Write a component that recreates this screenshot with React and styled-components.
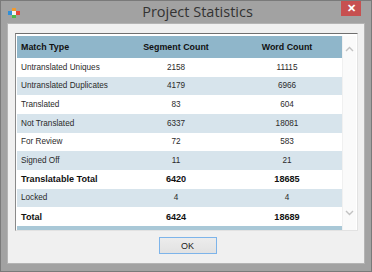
import React from "react";
import styled, { createGlobalStyle } from "styled-components";

const Global = createGlobalStyle`
  html, body {
    margin: 0;
    padding: 0;
    background: #8a8a8a;
  }
  * {
    box-sizing: border-box;
  }
`;

const Window = styled.div`
  width: 372px;
  height: 272px;
  background: #a2a2a2;
  border: 1px solid #7a7a7a;
  display: flex;
  flex-direction: column;
  overflow: hidden;
`;

const TitleBar = styled.div`
  height: 22px;
  display: flex;
  align-items: flex-start;
  padding-left: 7px;
`;

const Icon = styled.svg`
  margin-top: 7px;
  width: 12px;
  height: 10px;
`;

const Title = styled.div`
  flex: 1;
  text-align: center;
  padding-left: 34px;
  padding-top: 2px;
  font-family: "Open Sans", "Noto Sans", sans-serif;
  font-size: 14.5px;
  color: #333333;
  line-height: 18px;
`;

const CloseButton = styled.div`
  width: 20px;
  height: 16px;
  margin-top: -1px;
  margin-right: 10px;
  background: #c75050;
  color: #ffffff;
  font-family: "Liberation Sans", Arial, sans-serif;
  font-weight: bold;
  font-size: 11px;
  display: flex;
  align-items: center;
  justify-content: center;
`;

const Body = styled.div`
  flex: 1;
  margin: 0 6px 7px 6px;
  background: #f0f0f0;
  border: 1px solid #b4b4b4;
  display: flex;
  flex-direction: column;
  align-items: center;
  padding: 9px 6px 0 7px;
`;

const Panel = styled.div`
  width: 100%;
  height: 198px;
  background: #ffffff;
  border-top: 1px solid #6f6f6f;
  border-left: 1px solid #8a8a8a;
  border-right: 1px solid #e2e2e2;
  border-bottom: 1px solid #e2e2e2;
  padding: 2px 1px 0 1px;
  display: flex;
  overflow: hidden;
`;

const Table = styled.div`
  width: 325px;
  display: flex;
  flex-direction: column;
  font-family: "Liberation Sans", Arial, sans-serif;
  color: #1a1a1a;
`;

const Row = styled.div`
  display: grid;
  grid-template-columns: 103px 112px 110px;
  align-items: center;
  height: ${(p) => (p.$head ? "22px" : "18.67px")};
  flex-shrink: 0;
  background: ${(p) => (p.$head ? "#8fb6ca" : p.$alt ? "#d7e4ec" : "#ffffff")};
  font-size: ${(p) => (p.$head ? "8.9px" : p.$bold ? "9.1px" : "8.2px")};
  font-weight: ${(p) => (p.$head || p.$bold ? "bold" : "normal")};
  color: ${(p) => (p.$head || p.$bold ? "#111111" : "#2a2a2a")};
`;

const Cell = styled.div`
  padding-left: ${(p) => (p.$first ? "4px" : "0")};
  text-align: ${(p) => (p.$first ? "left" : "center")};
  white-space: nowrap;
`;

const BottomBand = styled.div`
  height: 5px;
  flex-shrink: 0;
  background: #a9c8d7;
`;

const ScrollBar = styled.div`
  flex: 1;
  display: flex;
  flex-direction: column;
  justify-content: space-between;
  align-items: center;
  padding: 10px 0 14px 0;
  background: #fafafa;
  border-left: 1px solid #f0f0f0;
`;

const Chevron = styled.svg`
  width: 9px;
  height: 6px;
`;

const Footer = styled.div`
  display: flex;
  justify-content: center;
  padding-top: 6px;
`;

const Button = styled.div`
  width: 58px;
  height: 17px;
  margin-left: 2px;
  border: 1px solid #7db4ea;
  background: linear-gradient(#ececec, #e2e2e2);
  display: flex;
  align-items: center;
  justify-content: center;
  font-family: "Liberation Sans", Arial, sans-serif;
  font-size: 9px;
  color: #1a1a1a;
`;

const rows = [
  ["Untranslated Uniques", "2158", "11115"],
  ["Untranslated Duplicates", "4179", "6966"],
  ["Translated", "83", "604"],
  ["Not Translated", "6337", "18081"],
  ["For Review", "72", "583"],
  ["Signed Off", "11", "21"],
  ["Translatable Total", "6420", "18685", true],
  ["Locked", "4", "4"],
  ["Total", "6424", "18689", true],
];

export default function App() {
  return (
    <>
      <Global />
      <Window>
        <TitleBar>
          <Icon viewBox="0 0 12 10">
            <rect x="4" y="0" width="4" height="3.5" fill="#f29a2e" />
            <rect x="0" y="3" width="4.5" height="4" fill="#2f8fd8" />
            <rect x="7.5" y="3" width="4.5" height="4" fill="#e5473a" />
            <rect x="4" y="6.5" width="4" height="3.5" fill="#4db848" />
            <rect x="4" y="3" width="4" height="4" fill="#f4f4f4" />
          </Icon>
          <Title>Project Statistics</Title>
          <CloseButton>✕</CloseButton>
        </TitleBar>
        <Body>
          <Panel>
            <Table>
              <Row $head>
                <Cell $first>Match Type</Cell>
                <Cell>Segment Count</Cell>
                <Cell>Word Count</Cell>
              </Row>
              {rows.map(([label, seg, words, bold], i) => (
                <Row key={label} $alt={i % 2 === 1} $bold={bold}>
                  <Cell $first>{label}</Cell>
                  <Cell>{seg}</Cell>
                  <Cell>{words}</Cell>
                </Row>
              ))}
              <BottomBand />
            </Table>
            <ScrollBar>
              <Chevron viewBox="0 0 9 6">
                <path d="M1 5 L4.5 1.5 L8 5" fill="none" stroke="#c2c2c2" strokeWidth="1.4" />
              </Chevron>
              <Chevron viewBox="0 0 9 6">
                <path d="M1 1 L4.5 4.5 L8 1" fill="none" stroke="#c2c2c2" strokeWidth="1.4" />
              </Chevron>
            </ScrollBar>
          </Panel>
          <Footer>
            <Button>OK</Button>
          </Footer>
        </Body>
      </Window>
    </>
  );
}
